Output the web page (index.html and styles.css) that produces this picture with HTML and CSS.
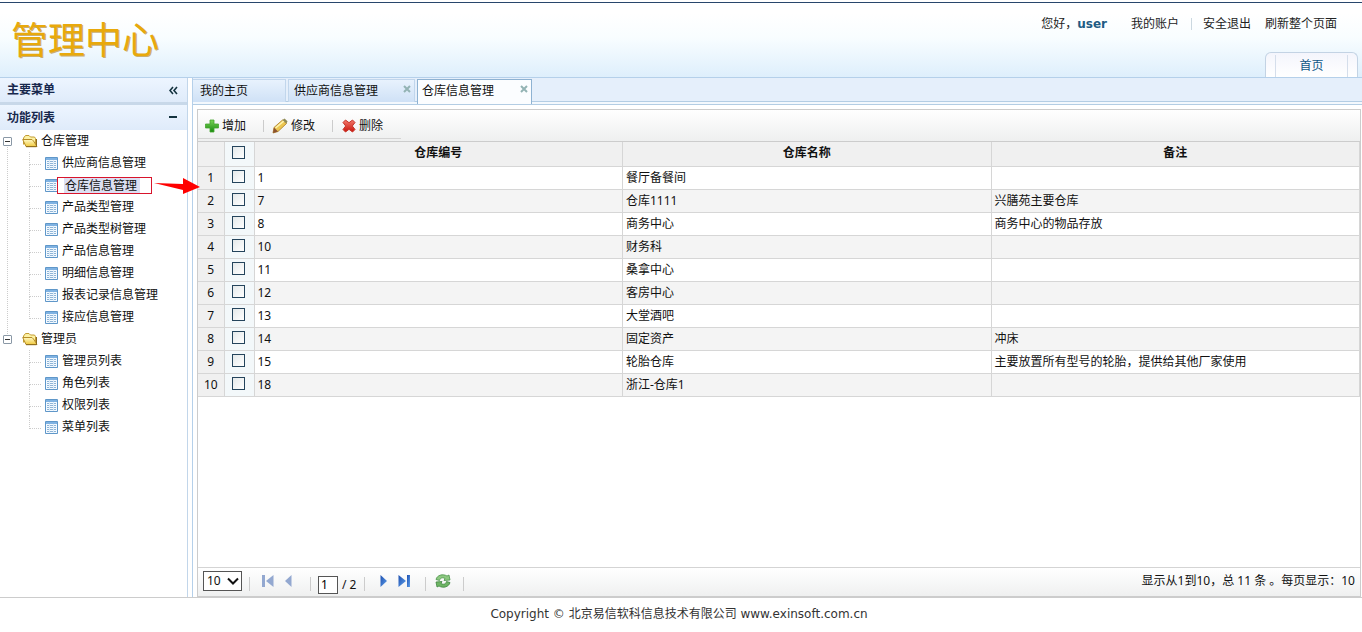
FILE: index.html
```html
<!DOCTYPE html>
<html lang="zh-CN">
<head>
<meta charset="utf-8">
<title>管理中心</title>
<link rel="stylesheet" href="styles.css">
</head>
<body>
<svg class="defs" aria-hidden="true">
  <defs>
    <linearGradient id="gFolder" x1="0" y1="0" x2="0" y2="1"><stop offset="0" stop-color="#fff9c4"/><stop offset="1" stop-color="#f0c93e"/></linearGradient>
    <linearGradient id="gGreen" x1="0" y1="0" x2="0" y2="1"><stop offset="0" stop-color="#7ad455"/><stop offset="1" stop-color="#178a10"/></linearGradient>
    <linearGradient id="gRed" x1="0" y1="0" x2="0" y2="1"><stop offset="0" stop-color="#f47a6c"/><stop offset="1" stop-color="#c8140c"/></linearGradient>
    <linearGradient id="gBlue" x1="0" y1="0" x2="1" y2="1"><stop offset="0" stop-color="#1d4fb0"/><stop offset="1" stop-color="#5fa0ea"/></linearGradient>
    <symbol id="folder" viewBox="0 0 16 14"><path d="M1.500 10.500V4L3.500 1.500h3.500l1.500 1.500h4l1 1.500v6" fill="#fdf2a4" stroke="#c39c34"/><path d="M.7 5.500H10l1.500 1.500 3.500 5.500H4z" fill="url(#gFolder)" stroke="#b78d28" stroke-linejoin="round"/><path d="M4 12.700H14.500V5" fill="none" stroke="#8c6a1c"/></symbol>
    <symbol id="sheet" viewBox="0 0 13 13"><path d="M.5.5h12v12H.5z" fill="#f4faff" stroke="#5f97c9"/><path d="M1 1h11v2H1z" fill="#7fb2e2"/><path d="M2 4.500h9M2 6.500h9M2 8.500h9M2 10.500h9" stroke="#8fb4d6"/><path d="M4.500 3v9M8.500 3v9" stroke="#dcebf8"/></symbol>
    <symbol id="add" viewBox="0 0 14 14"><path d="M5 1h4v4h4.500v4H9v4H5V9H.5V5H5z" fill="url(#gGreen)" stroke="#45a52e" stroke-width=".8" stroke-linejoin="round"/></symbol>
    <symbol id="edit" viewBox="0 0 16 16"><path d="M1 15l1-5.500L10.500 2l4 3.500L6 13.500z" fill="#ecc650" stroke="#a87b26" stroke-width=".8"/><path d="M3.500 10L12 2.800" stroke="#fff3ac" stroke-width="1.600"/><path d="M10.500 2l2-1.500 3 2.800-1 2.200z" fill="#8f8a55"/><path d="M1 15l1-5.500L6 13.500z" fill="#8b5230"/></symbol>
    <symbol id="del" viewBox="0 0 14 14"><path d="M1 3.500L3.500 1 7 3.700 10.500 1 13 3.500 10.300 7l2.700 3.500-2.500 2.500L7 10.300 3.500 13 1 10.500 3.700 7z" fill="url(#gRed)" stroke="#c63328" stroke-linejoin="round"/></symbol>
    <symbol id="first" viewBox="0 0 12 12"><path d="M0 0h3v12H0z"/><path d="M11.500 0v12L4 6z"/></symbol>
    <symbol id="prev" viewBox="0 0 7 12"><path d="M6.500 0v12L0 6z"/></symbol>
    <symbol id="next" viewBox="0 0 7 12"><path d="M.5 0v12L7 6z"/></symbol>
    <symbol id="last" viewBox="0 0 12 12"><path d="M9 0h3v12H9z"/><path d="M.5 0v12L8 6z"/></symbol>
    <symbol id="refresh" viewBox="0 0 16 14"><path d="M1 5.500C2 1 8-.5 12 2l2-1 1 5-6 .5 1-2C7.500 3 5 4 4.500 6.500z" fill="#8cc880" stroke="#4b944a" stroke-width=".8"/><path d="M15 8.500c-1 4.500-7 6-11 3.500l-2 1-1-5 6-.5-1 2c2.500 1.500 5 .5 5.500-2z" fill="#6db463" stroke="#3f8540" stroke-width=".8"/></symbol>
  </defs>
</svg>

<header class="top">
  <h1 class="logo">管理中心</h1>
  <div class="top-right">
    <nav class="user-nav">
      <span class="hello">您好，<b class="user-name">user</b></span>
      <a class="account" href="#">我的账户</a>
      <a class="logout" href="#">安全退出</a>
      <a href="#">刷新整个页面</a>
    </nav>
    <a class="home-tab" href="#"><span>首页</span></a>
  </div>
</header>

<div class="body">
  <aside class="side">
    <div class="side-head"><h2>主要菜单</h2>
      <button class="head-btn" type="button" aria-label="收起"><svg width="9" height="9" viewBox="0 0 9 9"><path d="M4 1L1 4.500 4 8M8 1L5 4.500 8 8" fill="none" stroke="#14333f" stroke-width="1.600"/></svg></button></div>
    <div class="side-head second"><h2>功能列表</h2>
      <button class="head-btn" type="button" aria-label="折叠"><svg width="9" height="9" viewBox="0 0 9 9"><path d="M0 3h8v2H0z" fill="#14333f"/></svg></button></div>
    <ul class="tree">
      <li class="group"><div class="node"><button class="toggle" type="button" aria-label="折叠"></button><svg class="i-folder"><use href="#folder"/></svg>仓库管理</div>
        <ul>
          <li><a href="#"><svg class="i-sheet"><use href="#sheet"/></svg>供应商信息管理</a></li>
          <li><a class="current" href="#"><svg class="i-sheet"><use href="#sheet"/></svg><span class="mark"><span>仓库信息管理</span></span></a>
            <svg class="arrow" viewBox="0 0 48 18"><path d="M1 6l29 1V1l17 9-17 7v-4z" fill="#f00"/></svg></li>
          <li><a href="#"><svg class="i-sheet"><use href="#sheet"/></svg>产品类型管理</a></li>
          <li><a href="#"><svg class="i-sheet"><use href="#sheet"/></svg>产品类型树管理</a></li>
          <li><a href="#"><svg class="i-sheet"><use href="#sheet"/></svg>产品信息管理</a></li>
          <li><a href="#"><svg class="i-sheet"><use href="#sheet"/></svg>明细信息管理</a></li>
          <li><a href="#"><svg class="i-sheet"><use href="#sheet"/></svg>报表记录信息管理</a></li>
          <li><a href="#"><svg class="i-sheet"><use href="#sheet"/></svg>接应信息管理</a></li>
        </ul>
      </li>
      <li class="group"><div class="node"><button class="toggle" type="button" aria-label="折叠"></button><svg class="i-folder"><use href="#folder"/></svg>管理员</div>
        <ul>
          <li><a href="#"><svg class="i-sheet"><use href="#sheet"/></svg>管理员列表</a></li>
          <li><a href="#"><svg class="i-sheet"><use href="#sheet"/></svg>角色列表</a></li>
          <li><a href="#"><svg class="i-sheet"><use href="#sheet"/></svg>权限列表</a></li>
          <li><a href="#"><svg class="i-sheet"><use href="#sheet"/></svg>菜单列表</a></li>
        </ul>
      </li>
    </ul>
  </aside>

  <main class="main">
    <div class="tabs">
      <div class="tab home"><a href="#">我的主页</a></div>
      <div class="tab"><a href="#">供应商信息管理</a><button class="close" type="button" aria-label="关闭"><svg width="8" height="8" viewBox="0 0 8 8"><path d="M1 1l6 6M7 1L1 7" stroke="#93b3b4" stroke-width="2"/></svg></button></div>
      <div class="tab active"><a href="#">仓库信息管理</a><button class="close" type="button" aria-label="关闭"><svg width="8" height="8" viewBox="0 0 8 8"><path d="M1 1l6 6M7 1L1 7" stroke="#93b3b4" stroke-width="2"/></svg></button></div>
    </div>
    <section class="grid">
      <div class="toolbar">
        <div class="tools">
          <button type="button"><svg class="i-tool"><use href="#add"/></svg>增加</button>
          <button type="button"><svg class="i-pen"><use href="#edit"/></svg>修改</button>
          <button type="button"><svg class="i-tool"><use href="#del"/></svg>删除</button>
        </div>
      </div>
      <div class="table-area">
        <table>
          <colgroup><col class="c-num"><col class="c-chk"><col><col><col></colgroup>
          <thead><tr><th></th><th class="chk"><input type="checkbox" aria-label="全选"></th><th>仓库编号</th><th>仓库名称</th><th>备注</th></tr></thead>
          <tbody>
            <tr><td>1</td><td class="chk"><input type="checkbox" aria-label="选择 1"></td><td>1</td><td>餐厅备餐间</td><td></td></tr>
            <tr><td>2</td><td class="chk"><input type="checkbox" aria-label="选择 2"></td><td>7</td><td>仓库1111</td><td>兴膳苑主要仓库</td></tr>
            <tr><td>3</td><td class="chk"><input type="checkbox" aria-label="选择 3"></td><td>8</td><td>商务中心</td><td>商务中心的物品存放</td></tr>
            <tr><td>4</td><td class="chk"><input type="checkbox" aria-label="选择 4"></td><td>10</td><td>财务科</td><td></td></tr>
            <tr><td>5</td><td class="chk"><input type="checkbox" aria-label="选择 5"></td><td>11</td><td>桑拿中心</td><td></td></tr>
            <tr><td>6</td><td class="chk"><input type="checkbox" aria-label="选择 6"></td><td>12</td><td>客房中心</td><td></td></tr>
            <tr><td>7</td><td class="chk"><input type="checkbox" aria-label="选择 7"></td><td>13</td><td>大堂酒吧</td><td></td></tr>
            <tr><td>8</td><td class="chk"><input type="checkbox" aria-label="选择 8"></td><td>14</td><td>固定资产</td><td>冲床</td></tr>
            <tr><td>9</td><td class="chk"><input type="checkbox" aria-label="选择 9"></td><td>15</td><td>轮胎仓库</td><td>主要放置所有型号的轮胎，提供给其他厂家使用</td></tr>
            <tr><td>10</td><td class="chk"><input type="checkbox" aria-label="选择 10"></td><td>18</td><td>浙江-仓库1</td><td></td></tr>
          </tbody>
        </table>
      </div>
      <div class="pager">
        <span class="size"><select aria-label="每页显示"><option>10</option></select><svg class="chev" viewBox="0 0 12 8"><path d="M1 1.500l5 5 5-5" fill="none" stroke="#111" stroke-width="2"/></svg></span>
        <span class="seg dim"><button type="button" aria-label="首页"><svg class="i-12"><use href="#first"/></svg></button><button type="button" aria-label="上一页"><svg class="i-7"><use href="#prev"/></svg></button></span>
        <label class="seg page"><input type="text" value="1" aria-label="页码">/ 2</label>
        <span class="seg forward"><button type="button" aria-label="下一页"><svg class="i-7"><use href="#next"/></svg></button><button type="button" aria-label="末页"><svg class="i-12"><use href="#last"/></svg></button></span>
        <span class="seg reload"><button type="button" aria-label="刷新"><svg class="i-re"><use href="#refresh"/></svg></button></span>
        <span class="summary">显示从1到10，总 11 条 。每页显示：10</span>
      </div>
    </section>
  </main>
</div>

<footer class="foot">Copyright © 北京易信软科信息技术有限公司 www.exinsoft.com.cn</footer>
</body>
</html>
```

FILE: styles.css
```css
* { box-sizing: border-box; }

body {
  display: flex;
  flex-direction: column;
  min-height: 100vh;
  margin: 0;
  background: #fff;
  color: #111;
  font: 12px/22px "Noto Sans", "Noto Sans CJK SC", sans-serif;
}

a { color: inherit; text-decoration: none; }
ul { margin: 0; padding: 0; list-style: none; }
svg { display: block; flex: none; }
button {
  display: flex;
  align-items: center;
  padding: 0;
  border: 0;
  background: none;
  color: inherit;
  font: inherit;
}
.defs { position: absolute; width: 0; height: 0; }

/* header */
.top {
  display: flex;
  justify-content: space-between;
  height: 75px;
  margin-top: 2px;
  border-top: 1px solid #28466c;
  background: linear-gradient(#fff 10px, #f8fdff 35px, #deeffc 74px);
}
.logo {
  margin: 0;
  padding-left: 11px;
  color: #e8a90c;
  font: 400 37px/71px "Noto Sans CJK SC", sans-serif;
  text-shadow: 1px 1px 0 #c9ae70;
}
.top-right {
  display: flex;
  flex-direction: column;
  justify-content: space-between;
  align-items: flex-end;
  padding-right: 4px;
}
.user-nav { display: flex; padding: 10px 21px 0 0; color: #222; }
.user-name { color: #1e5b84; font-family: "DejaVu Sans", sans-serif; }
.hello { margin-right: 24px; }
.account { padding-right: 12px; }
.logout { margin-right: 14px; padding-left: 12px; background: linear-gradient(#cbd8e0, #cbd8e0) 0 center / 1px 12px no-repeat; }
.home-tab {
  width: 93px;
  padding: 2px 9px 0;
  border: 1px solid #c3d3e4;
  border-bottom: 0;
  border-radius: 6px 6px 0 0;
  background: linear-gradient(#f4f5fc, #fff);
  color: #0f5687;
  text-align: center;
}
.home-tab span { display: block; line-height: 22px; border: solid #d5deeb; border-width: 0 1px; }

/* body */
.body { display: flex; flex: 1; border-top: 1px solid #b5d0ea; border-bottom: 1px solid #ccc; background: #fff; }
.side { width: 188px; flex: none; border-right: 1px solid #c2d6ea; }
.side-head {
  display: flex;
  justify-content: space-between;
  align-items: center;
  height: 24px;
  padding: 0 9px 0 7px;
  background: linear-gradient(#edf5ff, #dfebfa);
  color: #17284d;
}
.side-head.second { height: 28px; border-top: 3px solid #c8d8e9; }
.side-head h2 { margin: 0; font-size: 12px; line-height: 20px; }
.group { position: relative; }
.group:first-child::before {
  content: "";
  position: absolute;
  top: 17px;
  bottom: -6px;
  left: 7px;
  border-left: 1px dotted #ccc;
}
.node { display: flex; align-items: center; height: 22px; padding-left: 3px; }
.toggle {
  width: 9px;
  height: 9px;
  margin-right: 10px;
  border: 1px solid #8a98a6;
  border-radius: 1px;
  background: linear-gradient(#333, #333) center / 5px 1px no-repeat #fff;
}
.i-folder { width: 16px; height: 14px; margin-right: 3px; }
.group ul { margin-left: 29px; }
.group li { position: relative; height: 22px; }
.group li::before {
  content: "";
  position: absolute;
  top: 0;
  left: 0;
  width: 11px;
  height: 12px;
  border: dotted #ccc;
  border-width: 0 0 1px 1px;
}
.group li:not(:last-child)::after {
  content: "";
  position: absolute;
  top: 12px;
  bottom: 0;
  left: 0;
  border-left: 1px dotted #ccc;
}
.group li a { display: flex; align-items: center; height: 22px; padding-left: 16px; }
.i-sheet { width: 13px; height: 13px; margin-right: 4px; }
.current .i-sheet { margin-right: 0; }
.mark { margin-left: -1px; padding: 0 11px 0 6px; border: 1px solid #d8142c; line-height: 15px; z-index: 1; }
.mark span { display: block; padding: 0 3px 0 1px; background: #dcdff2; }
.arrow { position: absolute; top: 3px; left: 124px; width: 48px; height: 18px; z-index: 2; }

/* tabs */
.main { display: flex; flex: 1; flex-direction: column; min-width: 0; margin-left: 4px; border-left: 1px solid #b5d0ea; }
.tabs {
  display: flex;
  gap: 2px;
  height: 27px;
  padding-top: 1px;
  border-bottom: 1px solid #b3cde4;
  background: linear-gradient(#e5effb 23px, #b3cde4 23px, #b3cde4 24px, #f3f8fd 24px);
}
.tab {
  display: flex;
  justify-content: space-between;
  width: 127px;
  height: 23px;
  padding: 0 3px 0 5px;
  border: 1px solid #c1d6ec;
  border-bottom: 0;
  background: linear-gradient(#e8f2fd, #cfe1f6);
  line-height: 21px;
}
.tab.home { width: 93px; padding-left: 7px; border-left: 0; }
.tab.active { width: 115px; height: 25px; padding-left: 4px; border-color: #8eb2d2; background: #fbfdff; }
.close { height: 17px; }

/* grid */
.grid { display: flex; flex: 1; flex-direction: column; margin: 4px 1px 0 4px; border: 1px solid #ccc; }
.toolbar {
  height: 32px;
  border-bottom: 1px solid #ccc;
  background: linear-gradient(#fff, #eeefef);
}
.tools { display: flex; width: 203px; height: 29px; border-bottom: 1px solid #d4d4d4; }
.toolbar button { height: 32px; padding: 0 17px 0 7px; gap: 3px; white-space: nowrap; }
.toolbar button + button { padding-left: 9px; background: linear-gradient(#ccc, #ccc) 0 center / 1px 12px no-repeat; }
.toolbar button:last-child { padding: 0 0 0 10px; }
.i-tool { width: 14px; height: 14px; }
.i-pen { width: 16px; height: 16px; }
.table-area { flex: 1; }
table { width: 100%; table-layout: fixed; border-collapse: collapse; }
.c-num { width: 26px; }
.c-chk { width: 30px; }
th, td { height: 23px; padding: 0 3px; border: solid #d6d6d6; border-width: 0 1px 1px 0; line-height: 22px; text-align: left; white-space: nowrap; }
th { height: 24px; background: #f0f0f0; text-align: center; vertical-align: top; }
td:first-child { background: #f0f0f0; padding: 0; text-align: center; }
tbody tr:nth-child(even) { background: #f4f4f4; }
.chk { padding: 0 2px 0 0; background: #f3f8fa; vertical-align: top; }
input[type="checkbox"] {
  appearance: none;
  display: block;
  width: 13px;
  height: 13px;
  margin: 3px auto 0;
  border: 1px solid #24445c;
  background: linear-gradient(135deg, #e4e9ea, #fff);
}
th input[type="checkbox"] { margin-top: 4px; }

/* pager */
.pager {
  display: flex;
  align-items: center;
  height: 29px;
  padding: 0 5px 2px 5px;
  border-top: 1px solid #d4d4d4;
  background: linear-gradient(#fff, #eff0f0);
}
.size { position: relative; width: 39px; margin-right: 7px; }
.size select {
  appearance: none;
  display: block;
  width: 100%;
  height: 20px;
  padding: 0 3px;
  border: 1px solid #555;
  border-radius: 0;
  background: #fff;
  color: #111;
  font: inherit;
  line-height: 18px;
}
.chev { position: absolute; top: 6px; right: 3px; width: 12px; height: 8px; pointer-events: none; }
.seg { display: flex; align-items: center; gap: 11px; height: 20px; width: 61px; padding-left: 13px; background: linear-gradient(#ccc, #ccc) 0 bottom / 1px 14px no-repeat; }
.seg.page { width: 54px; gap: 4px; padding: 7px 0 0 8px; }
.seg.forward { padding-left: 16px; }
.seg.reload { width: 39px; padding-left: 10px; background: linear-gradient(#ccc, #ccc) 0 bottom / 1px 14px no-repeat, linear-gradient(#ccc, #ccc) right bottom / 1px 14px no-repeat; }
.seg svg { fill: url(#gBlue); }
.seg.dim svg { fill: #93a8d0; }
.page input { width: 20px; height: 18px; padding: 0 2px; border: 1px solid #555; background: #fff; font: inherit; }
.i-12 { width: 12px; height: 12px; }
.i-7 { width: 7px; height: 12px; }
.i-re { width: 16px; height: 14px; }
.summary { margin-left: auto; white-space: nowrap; }

.foot { height: 34px; padding: 5px 4px 0 0; color: #333; font-family: "DejaVu Sans", "Noto Sans CJK SC", sans-serif; text-align: center; }
```
